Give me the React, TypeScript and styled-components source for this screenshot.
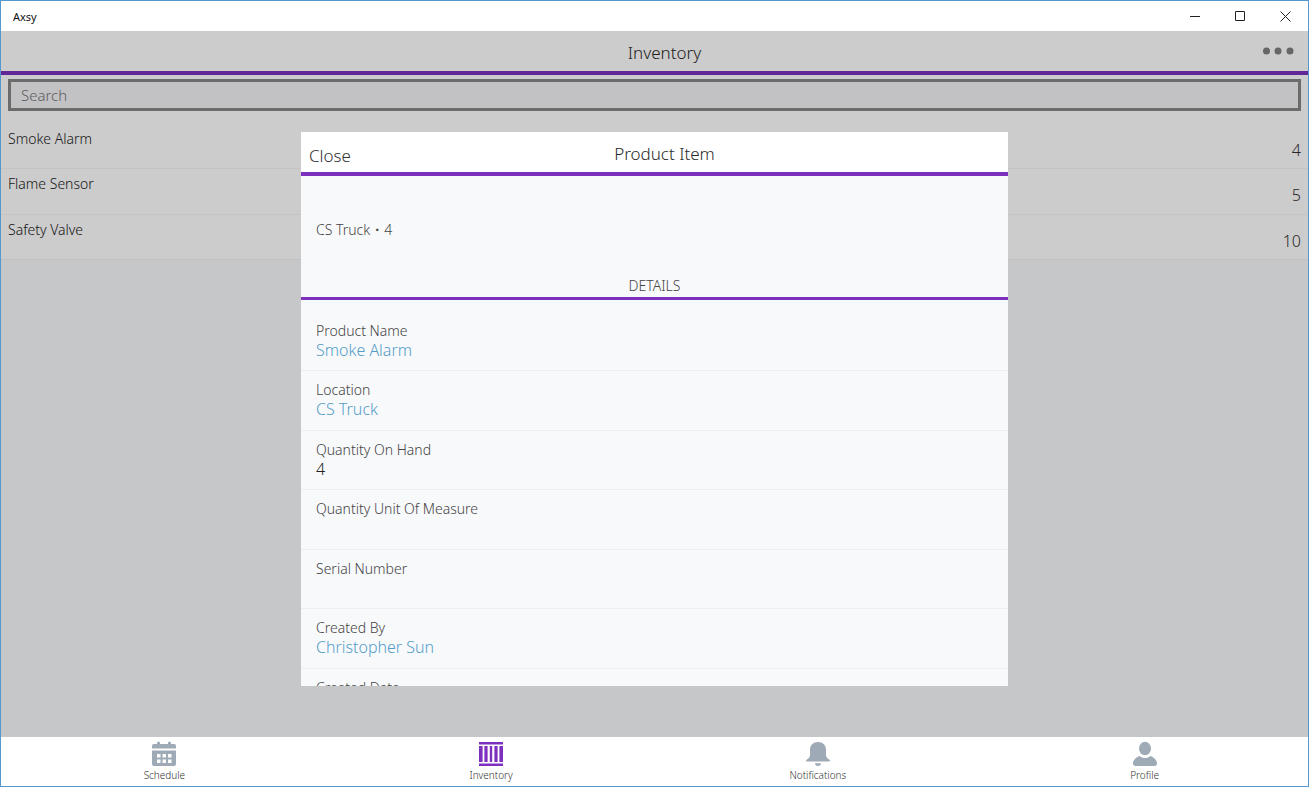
import React from "react";
import styled, { createGlobalStyle } from "styled-components";

const purple = "#7d2fbe";

const GlobalStyle = createGlobalStyle`
  * { box-sizing: border-box; }
  body { margin: 0; }
  body, button, input {
    font-family: "Noto Sans", "Open Sans", sans-serif;
    font-weight: 300;
  }
  button { border: 0; padding: 0; background: none; color: inherit; cursor: pointer; }
  h1, h2, h3, p, ul, dl, dd { margin: 0; padding: 0; font-weight: 300; }
  ul { list-style: none; }
`;

const Window = styled.div`
  height: 100vh;
  display: flex;
  flex-direction: column;
  border: 1px solid #5498cf;
  background: #f7f9fb;
  color: #444;
`;

const TitleBar = styled.header`
  flex: none;
  height: 30px;
  display: flex;
  align-items: center;
  justify-content: space-between;
  padding-left: 12px;
  background: #fff;
  color: #111;
  font-size: 11px;
  font-weight: 400;
`;

const WindowButtons = styled.div`
  display: flex;
  align-self: stretch;
`;

const WindowButton = styled.button`
  width: 45px;
  display: flex;
  align-items: center;
  justify-content: center;
`;

const Stage = styled.div`
  position: relative;
  flex: 1;
  min-height: 0;
  display: flex;
  flex-direction: column;
`;

const Main = styled.main`
  flex: 1;
  min-height: 0;
`;

const Bar = styled.div`
  height: 44px;
  display: grid;
  grid-template-columns: 1fr auto 1fr;
  align-items: center;
  padding: 0 8px;
  border-bottom: 4px solid ${purple};
  background: #fff;
`;

const BarTitle = styled.h1`
  grid-column: 2;
  padding: 4px 0 0 20px;
  color: #2a2a2a;
  font-size: 17px;
  line-height: 36px;
`;

const MoreButton = styled.button`
  justify-self: end;
  display: flex;
  padding: 0 6px;
`;

const SearchArea = styled.div`
  padding: 4px 7px 13px;
  background: #fff;
`;

const SearchBox = styled.input`
  display: block;
  width: 100%;
  height: 32px;
  padding: 0 10px;
  border: 3px solid #868686;
  border-radius: 0;
  outline: 0;
  background: #f3f3f5;
  color: #444;
  font-size: 15px;
  &::placeholder { color: #757575; opacity: 1; }
`;

const StockList = styled.ul`
  height: 136px;
  display: grid;
  grid-auto-rows: 1fr;
  background: #fff;
`;

const StockRow = styled.li`
  display: flex;
  justify-content: space-between;
  padding: 5px 7px 0;
  border-bottom: 1px solid #f6f6f6;
  &:last-child { border-color: #f0f0f0; }
`;

const StockName = styled.span`
  color: #222;
  font-size: 14px;
  line-height: 20px;
`;

const StockCount = styled.span`
  padding-top: 11px;
  color: #333;
  font-size: 16px;
  line-height: 20px;
`;

const Overlay = styled.div`
  position: absolute;
  inset: 0;
  padding: 101px 300px 51px;
  background: rgba(0, 0, 0, 0.2);
`;

const Dialog = styled.section`
  height: 100%;
  overflow: hidden;
  background: #f8f9fb;
`;

const CloseButton = styled.button`
  grid-column: 1;
  grid-row: 1;
  justify-self: start;
  padding-top: 6px;
  color: #333;
  font-size: 17px;
`;

const Summary = styled.p`
  display: flex;
  gap: 5px;
  padding: 44px 15px;
  color: #444;
  font-size: 14px;
  line-height: 20px;
`;

const Dot = styled.span`
  font-weight: 700;
`;

const SectionTitle = styled.h3`
  height: 16px;
  color: #444;
  font-size: 14px;
  line-height: 4px;
  text-align: center;
  border-bottom: 3px solid ${purple};
`;

const Fields = styled.dl`
  height: 416px;
  margin-top: 12px;
  display: grid;
  grid-template-rows: repeat(7, 1fr);
`;

const Field = styled.div`
  padding: 9px 15px 0;
  border-bottom: 1px solid #eeeff1;
`;

const FieldLabel = styled.dt`
  color: #444;
  font-size: 14px;
  line-height: 20px;
`;

const FieldValue = styled.dd`
  color: #222;
  font-size: 16px;
  line-height: 18px;
`;

const FieldLink = styled.a`
  color: #559dc8;
  text-decoration: none;
`;

const TabBar = styled.nav`
  flex: none;
  height: 49px;
  display: grid;
  grid-template-columns: repeat(4, 1fr);
  background: #fff;
`;

const Tab = styled.button<{ $active?: boolean }>`
  display: flex;
  flex-direction: column;
  align-items: center;
  padding-top: 4px;
  color: ${(p) => (p.$active ? purple : "#9eaab6")};
`;

const TabLabel = styled.span`
  margin-top: 1px;
  color: #333;
  font-size: 10px;
  line-height: 14px;
`;

const CalendarIcon = () => (
  <svg width="26" height="26" viewBox="0 0 26 26" fill="currentColor" aria-hidden="true">
    <path d="M3 3h3V2a1.500 1.500 0 0 1 3 0v1h8V2a1.500 1.500 0 0 1 3 0v1h3a2 2 0 0 1 2 2v2.500H1V5a2 2 0 0 1 2-2z" />
    <path
      fillRule="evenodd"
      d="M1 9.500h24V23a2 2 0 0 1-2 2H3a2 2 0 0 1-2-2zM6 13v3.500h3.500V13zM11.500 13v3.500H15V13zM17 13v3.500h3.500V13zM6 18.500V22h3.500v-3.500zM11.500 18.500V22H15v-3.500zM17 18.500V22h3.500v-3.500z"
    />
  </svg>
);

const InventoryIcon = () => (
  <svg width="26" height="26" viewBox="0 0 26 26" fill="currentColor" aria-hidden="true">
    <path d="M1 1h24v2.600H1zM1 22.400h24V25H1zM1 5h3.600v16H1zM6.400 5h3.200v16H6.400zM11.800 5h2.400v16h-2.400zM16.400 5h3.200v16h-3.200zM21.400 5H25v16h-3.600z" />
  </svg>
);

const BellIcon = () => (
  <svg width="26" height="26" viewBox="0 0 26 26" fill="currentColor" aria-hidden="true">
    <path d="M13 1c4.700 0 8 3.200 8 7.600v5.400c0 2.300 1.200 3.200 2.800 4.200 1.800 1.200 1.400 2.300.2 2.300H2c-1.200 0-1.600-1.100.2-2.300C3.800 17.200 5 16.300 5 14V8.600C5 4.200 8.300 1 13 1zM10 22.300h6a3 2.600 0 0 1-6 0z" />
  </svg>
);

const ProfileIcon = () => (
  <svg width="26" height="26" viewBox="0 0 26 26" fill="currentColor" aria-hidden="true">
    <ellipse cx="13" cy="7.500" rx="6" ry="6.700" />
    <path d="M7.600 15c1.600 1.400 3.300 2 5.400 2s3.800-.6 5.400-2c3.500 1.300 6.600 4 6.600 7.500 0 1.500-1 2.500-2.500 2.500h-19C2 25 1 24 1 22.500 1 19 4.100 16.300 7.600 15z" />
  </svg>
);

const stock = [
  { name: "Smoke Alarm", count: 4 },
  { name: "Flame Sensor", count: 5 },
  { name: "Safety Valve", count: 10 },
];

const fields: { label: string; value?: string; link?: boolean }[] = [
  { label: "Product Name", value: "Smoke Alarm", link: true },
  { label: "Location", value: "CS Truck", link: true },
  { label: "Quantity On Hand", value: "4" },
  { label: "Quantity Unit Of Measure" },
  { label: "Serial Number" },
  { label: "Created By", value: "Christopher Sun", link: true },
  { label: "Created Date" },
];

const tabs = [
  { label: "Schedule", Icon: CalendarIcon },
  { label: "Inventory", Icon: InventoryIcon, active: true },
  { label: "Notifications", Icon: BellIcon },
  { label: "Profile", Icon: ProfileIcon },
];

export default function App() {
  return (
    <>
      <GlobalStyle />
      <Window>
        <TitleBar>
          <span>Axsy</span>
          <WindowButtons>
            <WindowButton aria-label="Minimize">
              <svg width="11" height="11" viewBox="0 0 11 11" stroke="#222"><path d="M0 5.500h10" /></svg>
            </WindowButton>
            <WindowButton aria-label="Maximize">
              <svg width="11" height="11" viewBox="0 0 11 11" fill="none" stroke="#222"><path d="M.5.5h9v9h-9z" /></svg>
            </WindowButton>
            <WindowButton aria-label="Close window">
              <svg width="11" height="11" viewBox="0 0 11 11" stroke="#222"><path d="M.5.5l10 10M10.500.5l-10 10" /></svg>
            </WindowButton>
          </WindowButtons>
        </TitleBar>
        <Stage>
          <Main>
            <Bar>
              <BarTitle>Inventory</BarTitle>
              <MoreButton aria-label="More">
                <svg width="32" height="8" viewBox="0 0 32 8" fill="#808080">
                  <circle cx="4.500" cy="4" r="3.500" />
                  <circle cx="16" cy="4" r="3.500" />
                  <circle cx="28" cy="4" r="3.500" />
                </svg>
              </MoreButton>
            </Bar>
            <SearchArea>
              <SearchBox type="search" placeholder="Search" aria-label="Search" />
            </SearchArea>
            <StockList>
              {stock.map((item) => (
                <StockRow key={item.name}>
                  <StockName>{item.name}</StockName>
                  <StockCount>{item.count}</StockCount>
                </StockRow>
              ))}
            </StockList>
          </Main>
          <Overlay>
            <Dialog role="dialog" aria-label="Product Item">
              <Bar>
                <CloseButton>Close</CloseButton>
                <BarTitle as="h2">Product Item</BarTitle>
              </Bar>
              <Summary>
                <span>CS Truck</span>
                <Dot>·</Dot>
                <span>4</span>
              </Summary>
              <SectionTitle>DETAILS</SectionTitle>
              <Fields>
                {fields.map((f) => (
                  <Field key={f.label}>
                    <FieldLabel>{f.label}</FieldLabel>
                    <FieldValue>{f.link ? <FieldLink href="#">{f.value}</FieldLink> : f.value}</FieldValue>
                  </Field>
                ))}
              </Fields>
            </Dialog>
          </Overlay>
        </Stage>
        <TabBar>
          {tabs.map(({ label, Icon, active }) => (
            <Tab key={label} $active={active}>
              <Icon />
              <TabLabel>{label}</TabLabel>
            </Tab>
          ))}
        </TabBar>
      </Window>
    </>
  );
}
